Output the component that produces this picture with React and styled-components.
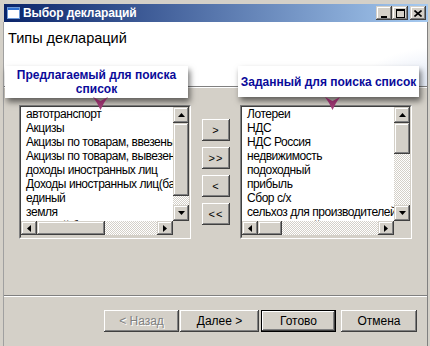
import React from 'react';
import styled, { createGlobalStyle, css } from 'styled-components';

const Global = createGlobalStyle`
  html, body { margin: 0; padding: 0; background: #D4D0C8; }
  body { font-family: "Liberation Sans", Arial, sans-serif; }
  * { box-sizing: border-box; }
`;

const scrollRaised = css`
  background: #D4D0C8;
  box-shadow: inset -1px -1px #404040, inset 1px 1px #D4D0C8, inset -2px -2px #808080, inset 2px 2px #ffffff;
`;

const btnRaised = css`
  background: #D4D0C8;
  box-shadow: inset -1px -1px #404040, inset 1px 1px #ffffff, inset -2px -2px #808080;
`;

const checker = css`
  background-color: #D4D0C8;
  background-image: conic-gradient(#ffffff 25%, #D4D0C8 0 50%, #ffffff 0 75%, #D4D0C8 0);
  background-size: 2px 2px;
`;

const Window = styled.div`
  position: relative;
  width: 430px;
  height: 346px;
  background: #D4D0C8;
  padding: 4px 2px 0 3px;
  display: flex;
  flex-direction: column;
  overflow: hidden;
`;

const TitleBar = styled.div`
  flex: none;
  height: 18px;
  margin-left: 1px;
  background: linear-gradient(to right, #0A246A, #A6CAF0);
  display: flex;
  align-items: center;
  padding: 0 2px 0 3px;
`;

const TitleText = styled.span`
  flex: 1;
  margin-left: 3px;
  color: #ffffff;
  font-weight: bold;
  font-size: 12px;
  letter-spacing: -0.1px;
  white-space: nowrap;
`;

const TitleButtons = styled.div`
  display: flex;
`;

const CaptionButton = styled.div`
  ${scrollRaised};
  width: 16px;
  height: 14px;
  margin-left: ${p => (p.$gap ? '2px' : '0')};
  display: flex;
  align-items: center;
  justify-content: center;
`;

const Client = styled.div`
  flex: 1;
  display: flex;
  flex-direction: column;
  border-left: 1px solid #A0A0A0;
  border-right: 1px solid #808080;
`;

const Header = styled.div`
  flex: none;
  height: 65px;
  background: radial-gradient(ellipse 90px 40px at 105% 100%, #dde5f4 0%, #eef2fa 50%, #ffffff 100%);
  border-bottom: 1px solid #808080;
  padding: 8px 0 0 4px;
`;

const HeaderTitle = styled.div`
  font-size: 14.5px;
  line-height: 16px;
  color: #000;
`;

const Body = styled.div`
  flex: none;
  height: 208px;
  border-top: 1px solid #ffffff;
  padding: 17px 0 0 15px;
  display: flex;
  align-items: flex-start;
`;

const ListFrame = styled.div`
  flex: none;
  width: 172px;
  height: 134px;
  border: 1px solid;
  border-color: #808080 #ffffff #ffffff #808080;
  display: flex;
  flex-direction: column;
`;

const ListInner = styled.div`
  flex: 1;
  border: 1px solid;
  border-color: #404040 #D4D0C8 #D4D0C8 #404040;
  display: flex;
  flex-direction: column;
  min-height: 0;
  background: #D4D0C8;
`;

const ListMain = styled.div`
  display: flex;
  height: 114px;
  flex: none;
`;

const Items = styled.div`
  flex: 1;
  min-width: 0;
  background: #ffffff;
  overflow: hidden;
`;

const Item = styled.div`
  height: 14px;
  line-height: 14px;
  padding-left: 5px;
  font-size: 12px;
  letter-spacing: -0.45px;
  white-space: nowrap;
  color: #000;
`;

const VScroll = styled.div`
  flex: none;
  width: 16px;
  display: flex;
  flex-direction: column;
`;

const HScroll = styled.div`
  flex: none;
  height: 14px;
  display: flex;
`;

const ArrowBox = styled.div`
  ${scrollRaised};
  flex: none;
  width: 16px;
  height: ${p => (p.$h ? `${p.$h}px` : '16px')};
  display: flex;
  align-items: center;
  justify-content: center;
`;

const Thumb = styled.div`
  ${scrollRaised};
  flex: none;
`;

const Track = styled.div`
  ${checker};
  flex: 1;
`;

const Corner = styled.div`
  flex: none;
  width: 16px;
  background: #D4D0C8;
`;

const MoveColumn = styled.div`
  flex: none;
  display: flex;
  flex-direction: column;
  gap: 6px;
  margin: 14px 10px 0 11px;
`;

const SmallButton = styled.div`
  ${btnRaised};
  width: 28px;
  height: 22px;
  display: flex;
  align-items: center;
  justify-content: center;
  font-size: 11px;
  color: #000;
  letter-spacing: 1px;
`;

const Separator = styled.div`
  flex: none;
  height: 2px;
  border-top: 1px solid #808080;
  border-bottom: 1px solid #ffffff;
`;

const Footer = styled.div`
  flex: 1;
  display: flex;
  align-items: flex-start;
  padding: 13px 0 0 100px;
`;

const WizButton = styled.div`
  ${btnRaised};
  width: ${p => p.$w}px;
  height: 22px;
  margin-left: ${p => p.$ml || 0}px;
  display: flex;
  align-items: center;
  justify-content: center;
  font-size: 12px;
  color: ${p => (p.$disabled ? '#808080' : '#000')};
  text-shadow: ${p => (p.$disabled ? '1px 1px #ffffff' : 'none')};
  ${p =>
    p.$default &&
    css`
      box-shadow: inset 0 0 0 1px #000, inset -2px -2px #404040, inset 2px 2px #ffffff, inset -3px -3px #808080;
    `}
`;

const Callout = styled.div`
  position: absolute;
  left: ${p => p.$x}px;
  top: ${p => p.$y}px;
  width: ${p => p.$w}px;
  height: ${p => p.$h}px;
  background: #ffffff;
  box-shadow: 2px 4px 6px rgba(0, 0, 0, 0.55);
  display: flex;
  align-items: center;
  justify-content: center;
  text-align: center;
  color: #0A0A9A;
  font-weight: bold;
  font-size: 12px;
  line-height: 14px;
`;

const Pointer = styled.svg`
  position: absolute;
  left: ${p => p.$x}px;
  top: ${p => p.$y}px;
`;

const UpArrow = () => (
  <svg width="7" height="4" viewBox="0 0 7 4"><polygon points="3.5,0 7,4 0,4" fill="#000" /></svg>
);
const DownArrow = () => (
  <svg width="7" height="4" viewBox="0 0 7 4"><polygon points="0,0 7,0 3.5,4" fill="#000" /></svg>
);
const LeftArrow = () => (
  <svg width="4" height="7" viewBox="0 0 4 7"><polygon points="4,0 4,7 0,3.5" fill="#000" /></svg>
);
const RightArrow = () => (
  <svg width="4" height="7" viewBox="0 0 4 7"><polygon points="0,0 4,3.5 0,7" fill="#000" /></svg>
);

const ListBox = ({ items, thumbV, thumbH }) => (
  <ListFrame>
    <ListInner>
      <ListMain>
        <Items>
          {items.map((t, i) => (
            <Item key={i}>{t}</Item>
          ))}
        </Items>
        <VScroll>
          <ArrowBox><UpArrow /></ArrowBox>
          <Thumb style={{ height: thumbV }} />
          <Track />
          <ArrowBox><DownArrow /></ArrowBox>
        </VScroll>
      </ListMain>
      <HScroll>
        <ArrowBox $h={14}><LeftArrow /></ArrowBox>
        <Thumb style={{ width: thumbH }} />
        <Track />
        <ArrowBox $h={14}><RightArrow /></ArrowBox>
        <Corner />
      </HScroll>
    </ListInner>
  </ListFrame>
);

const leftItems = [
  'автотранспорт',
  'Акцизы',
  'Акцизы по товарам, ввезены',
  'Акцизы по товарам, вывезен',
  'доходы иностранных лиц',
  'Доходы иностранных лиц(ба',
  'единый',
  'земля',
  'игорный бизнес',
];

const rightItems = [
  'Лотереи',
  'НДС',
  'НДС Россия',
  'недвижимость',
  'подоходный',
  'прибыль',
  'Сбор с/х',
  'сельхоз для производителей',
  'транспортный',
];

const ArrowMark = ({ x, y }) => (
  <Pointer $x={x} $y={y} width="15" height="13" viewBox="0 0 15 13">
    <defs>
      <linearGradient id={`pg${x}`} x1="0" y1="0" x2="0" y2="1">
        <stop offset="0" stopColor="#7A1F55" />
        <stop offset="1" stopColor="#A8447E" />
      </linearGradient>
    </defs>
    <polygon points="0,0 7.5,4 15,0 11,6 7.5,13 4,6" fill={`url(#pg${x})`} />
  </Pointer>
);

export default function App() {
  return (
    <>
      <Global />
      <Window>
        <TitleBar>
          <svg width="13" height="12" viewBox="0 0 13 12">
            <rect x="0.5" y="0.5" width="12" height="11" fill="#ffffff" stroke="#6E9AD8" />
            <rect x="1" y="1" width="11" height="2" fill="#2F6FD0" />
          </svg>
          <TitleText>Выбор деклараций</TitleText>
          <TitleButtons>
            <CaptionButton>
              <svg width="8" height="9" viewBox="0 0 8 9"><rect x="1" y="7" width="6" height="2" fill="#000" /></svg>
            </CaptionButton>
            <CaptionButton>
              <svg width="9" height="9" viewBox="0 0 9 9">
                <rect x="0.5" y="0.5" width="8" height="8" fill="none" stroke="#000" />
                <rect x="0" y="0" width="9" height="2" fill="#000" />
              </svg>
            </CaptionButton>
            <CaptionButton $gap>
              <svg width="8" height="7" viewBox="0 0 8 7">
                <path d="M0.5 0.5 L7.5 6.5 M7.5 0.5 L0.5 6.5" stroke="#000" strokeWidth="1.6" />
              </svg>
            </CaptionButton>
          </TitleButtons>
        </TitleBar>
        <Client>
          <Header>
            <HeaderTitle>Типы деклараций</HeaderTitle>
          </Header>
          <Body>
            <ListBox items={leftItems} thumbV={73} thumbH={68} />
            <MoveColumn>
              <SmallButton>&gt;</SmallButton>
              <SmallButton>&gt;&gt;</SmallButton>
              <SmallButton>&lt;</SmallButton>
              <SmallButton>&lt;&lt;</SmallButton>
            </MoveColumn>
            <ListBox items={rightItems} thumbV={31} thumbH={24} />
          </Body>
          <Separator />
          <Footer>
            <WizButton $w={75} $disabled>&lt; Назад</WizButton>
            <WizButton $w={79} $ml={1}>Далее &gt;</WizButton>
            <WizButton $w={75} $ml={2} $default>Готово</WizButton>
            <WizButton $w={76} $ml={5}>Отмена</WizButton>
          </Footer>
        </Client>
        <Callout $x={5} $y={66} $w={183} $h={32}>
          Предлагаемый для поиска
          <br />
          список
        </Callout>
        <Callout $x={238} $y={66} $w={181} $h={31}>
          Заданный для поиска список
        </Callout>
        <ArrowMark x={93} y={97} />
        <ArrowMark x={325} y={97} />
      </Window>
    </>
  );
}
